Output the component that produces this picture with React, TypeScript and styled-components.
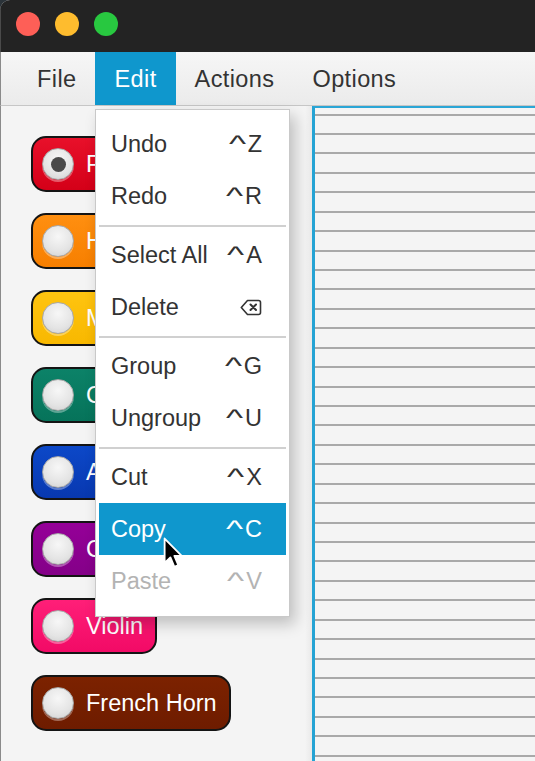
import styled, { createGlobalStyle } from 'styled-components';

const GlobalStyle = createGlobalStyle`
    html, body {
        margin: 0;
        padding: 0;
        background: #2b3339;
    }
    body {
        font-family: "Liberation Sans", Arial, sans-serif;
    }
`;

const Window = styled.div`
    position: relative;
    width: 535px;
    height: 761px;
    display: flex;
    flex-direction: column;
    overflow: hidden;
    background: #f4f4f4;
    border-top-left-radius: 10px;
`;

const TitleBar = styled.div`
    height: 52px;
    flex-shrink: 0;
    display: flex;
    align-items: center;
    gap: 15px;
    padding-left: 15px;
    background: #232323;
    border-left: 1px solid #4a4a4a;
`;

const Light = styled.div<{ $color: string }>`
    width: 24px;
    height: 24px;
    border-radius: 50%;
    background: ${p => p.$color};
    margin-top: -4px;
`;

const MenuBar = styled.div`
    height: 54px;
    box-sizing: border-box;
    flex-shrink: 0;
    display: flex;
    padding-left: 17px;
    background: linear-gradient(#f6f6f6, #ebebeb);
    border-bottom: 1px solid #c6c6c6;
    border-left: 1px solid #8a8a8a;
`;

const MenuTitle = styled.div<{ $active?: boolean }>`
    display: flex;
    align-items: center;
    padding: 2px 19px 0;
    font-size: 23.5px;
    letter-spacing: 0.4px;
    color: ${p => (p.$active ? '#ffffff' : '#333333')};
    background: ${p => (p.$active ? '#0f97cd' : 'transparent')};
`;

const Body = styled.div`
    flex: 1;
    display: flex;
    border-left: 1px solid #8a8a8a;
`;

const LeftPanel = styled.div`
    width: 304px;
    box-sizing: border-box;
    display: flex;
    flex-direction: column;
    align-items: flex-start;
    gap: 21px;
    padding: 30px 0 0 30px;
`;

const Divider = styled.div`
    width: 7px;
    background: linear-gradient(90deg, #f4f4f4, #e9e9e9);
`;

const Staff = styled.div`
    flex: 1;
    border-top: 2px solid #2ba6d6;
    border-left: 3px solid #25a3d4;
    background: repeating-linear-gradient(
        180deg,
        transparent 0,
        transparent 5.5px,
        #a9a9a9 5.5px,
        #a9a9a9 7.5px,
        transparent 7.5px,
        transparent 19.43px
    ), #f4f4f4;
`;

const Pill = styled.div<{ $color: string }>`
    height: 56px;
    box-sizing: border-box;
    display: flex;
    align-items: center;
    gap: 12px;
    padding: 0 12px 0 9px;
    border: 2px solid #141414;
    border-radius: 15px;
    background: ${p => p.$color};
    color: #ffffff;
    font-size: 23.5px;
    white-space: nowrap;
`;

const Radio = styled.div<{ $on?: boolean }>`
    width: 32px;
    height: 32px;
    box-sizing: border-box;
    flex-shrink: 0;
    border-radius: 50%;
    border: 1px solid #a8a8a8;
    background: radial-gradient(circle at 50% 35%, #f7f7f7 0%, #e4e4e4 60%, #cfcfcf 100%);
    box-shadow: 0 2px 0 rgba(255, 255, 255, 0.35);
    display: flex;
    align-items: center;
    justify-content: center;
    &::after {
        content: '';
        display: ${p => (p.$on ? 'block' : 'none')};
        width: 15px;
        height: 15px;
        border-radius: 50%;
        background: #4a4a4a;
    }
`;

const Dropdown = styled.div`
    position: absolute;
    left: 95px;
    top: 109px;
    width: 195px;
    box-sizing: border-box;
    padding: 8px 3px 9px;
    background: #ffffff;
    border: 1px solid #c9c9c9;
    box-shadow: 5px 7px 14px rgba(0, 0, 0, 0.22);
`;

const Item = styled.div<{ $selected?: boolean; $disabled?: boolean }>`
    height: 52px;
    box-sizing: border-box;
    display: flex;
    align-items: center;
    justify-content: space-between;
    padding: 0 24px 0 12px;
    font-size: 23.5px;
    color: ${p => (p.$selected ? '#ffffff' : p.$disabled ? '#b3b3b3' : '#333333')};
    background: ${p => (p.$selected ? '#0f97cd' : 'transparent')};
`;

const Shortcut = styled.span`
    display: flex;
    align-items: center;
`;

const Caret = styled.span`
    display: inline-block;
    transform: scaleX(1.55);
    transform-origin: right center;
    margin-right: 2px;
`;

const Separator = styled.div`
    height: 7px;
    display: flex;
    align-items: center;
    &::before {
        content: '';
        flex: 1;
        height: 2px;
        background: #d0d0d0;
    }
`;

const Cursor = styled.svg`
    position: absolute;
    left: 163px;
    top: 537px;
`;

const instruments = [
    { name: 'Piano', color: 'linear-gradient(#e8102a, #d40018)', on: true },
    { name: 'Harp', color: 'linear-gradient(#ff8f10, #f77f00)' },
    { name: 'Marimba', color: 'linear-gradient(#ffc410, #f8b800)' },
    { name: 'Church Organ', color: 'linear-gradient(#0c8268, #06735a)' },
    { name: 'Accordion', color: 'linear-gradient(#0c48c8, #0838b0)' },
    { name: 'Clarinet', color: 'linear-gradient(#950098, #840088)' },
    { name: 'Violin', color: 'linear-gradient(#ff1f78, #f20a66)' },
    { name: 'French Horn', color: 'linear-gradient(#7c2200, #6e1c00)' },
];

function DeleteIcon() {
    return (
        <svg width="22" height="17" viewBox="0 0 22 17">
            <path d="M7.5 1.5 H18.5 a2 2 0 0 1 2 2 V13.5 a2 2 0 0 1 -2 2 H7.5 L1.3 8.5 Z"
                fill="none" stroke="#333" strokeWidth="1.6" strokeLinejoin="round" />
            <path d="M10.5 5.5 L16 11 M16 5.5 L10.5 11" stroke="#333" strokeWidth="2" strokeLinecap="round" />
        </svg>
    );
}

type Entry = { label: string; key?: string; icon?: boolean; selected?: boolean; disabled?: boolean } | 'sep';

const entries: Entry[] = [
    { label: 'Undo', key: 'Z' },
    { label: 'Redo', key: 'R' },
    'sep',
    { label: 'Select All', key: 'A' },
    { label: 'Delete', icon: true },
    'sep',
    { label: 'Group', key: 'G' },
    { label: 'Ungroup', key: 'U' },
    'sep',
    { label: 'Cut', key: 'X' },
    { label: 'Copy', key: 'C', selected: true },
    { label: 'Paste', key: 'V', disabled: true },
];

function App() {
    return (
        <Window>
            <GlobalStyle />
            <TitleBar>
                <Light $color="#fe5f57" />
                <Light $color="#febc2e" />
                <Light $color="#28c840" />
            </TitleBar>

            <MenuBar>
                <MenuTitle>File</MenuTitle>
                <MenuTitle $active>Edit</MenuTitle>
                <MenuTitle>Actions</MenuTitle>
                <MenuTitle>Options</MenuTitle>
            </MenuBar>

            <Body>
                <LeftPanel>
                    {instruments.map(i => (
                        <Pill key={i.name} $color={i.color}>
                            <Radio $on={i.on} />
                            {i.name}
                        </Pill>
                    ))}
                </LeftPanel>
                <Divider />
                <Staff />
            </Body>

            <Dropdown>
                {entries.map((e, idx) =>
                    e === 'sep' ? (
                        <Separator key={idx} />
                    ) : (
                        <Item key={idx} $selected={e.selected} $disabled={e.disabled}>
                            <span>{e.label}</span>
                            <Shortcut>
                                {e.icon ? <DeleteIcon /> : (<><Caret>^</Caret>{e.key}</>)}
                            </Shortcut>
                        </Item>
                    )
                )}
            </Dropdown>

            <Cursor width="20" height="32" viewBox="0 0 13 21">
                <path d="M1 1 L1 17 L4.8 13.4 L7.4 19.6 L10 18.5 L7.4 12.4 L12.2 12.4 Z"
                    fill="#000" stroke="#fff" strokeWidth="1.2" strokeLinejoin="round" />
            </Cursor>
        </Window>
    );
}

export default App;
